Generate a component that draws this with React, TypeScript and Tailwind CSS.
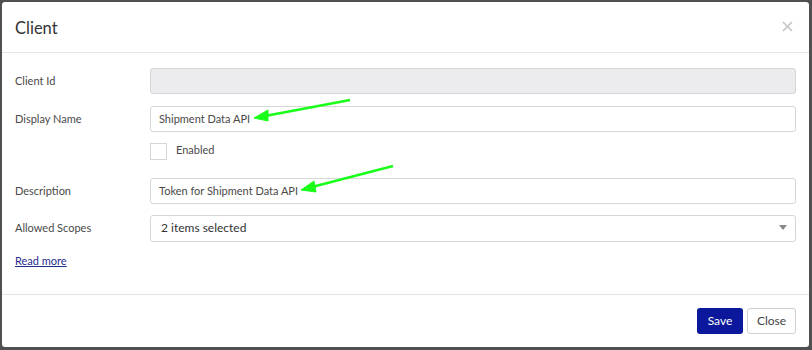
import React from "react";

const font = { fontFamily: 'Lato, "Open Sans", sans-serif' };

function Row({ label, children, h = "h-[26px]" }: { label: string; children: React.ReactNode; h?: string }) {
  return (
    <div className={`flex items-center ${h}`}>
      <div className="w-[135px] text-[11px] text-[#4a4a4a]">{label}</div>
      <div className="flex-1">{children}</div>
    </div>
  );
}

export default function App() {
  return (
    <div className="w-[812px] h-[350px] bg-[#505050] pt-[2px] pl-[2px] pr-[3px] pb-[3px]" style={font}>
      <div className="relative w-full h-full bg-white rounded-[3px] flex flex-col">
        <div className="h-[51px] flex items-center justify-between pl-[13px] pr-[16px] border-b border-[#e4e4e4]">
          <div className="mt-[2px] text-[16.5px] text-[#333]">Client</div>
          <svg width="11" height="11" viewBox="0 0 11 11" className="mt-[-1px]">
            <path d="M1 1 L10 10 M10 1 L1 10" stroke="#c4c4c4" strokeWidth="1.6" />
          </svg>
        </div>
        <div className="flex-1 pl-[13px] pr-[13px] pt-[15px] flex flex-col">
          <Row label="Client Id">
            <div className="h-[26px] rounded-[3px] border border-[#d6d6d6] bg-[#ececee]" />
          </Row>
          <div className="h-[12px]" />
          <Row label="Display Name">
            <div className="h-[26px] rounded-[3px] border border-[#d6d6d6] bg-white flex items-center px-[8px] text-[11px] text-[#4a4a4a]">
              Shipment Data API
            </div>
          </Row>
          <div className="h-[11px]" />
          <div className="flex items-center h-[17px]">
            <div className="w-[135px]" />
            <div className="w-[17px] h-[17px] border border-[#d6d6d6] bg-white" />
            <div className="ml-[9px] mt-[-3px] text-[11px] text-[#4a4a4a]">Enabled</div>
          </div>
          <div className="h-[18px]" />
          <Row label="Description">
            <div className="h-[26px] rounded-[3px] border border-[#d6d6d6] bg-white flex items-center px-[8px] text-[11px] text-[#4a4a4a]">
              Token for Shipment Data API
            </div>
          </Row>
          <div className="h-[11px]" />
          <Row label="Allowed Scopes">
            <div className="h-[27px] rounded-[3px] border border-[#d6d6d6] bg-white flex items-center justify-between pl-[10px] pr-[8px] text-[12px] text-[#333]">
              <span>2 items selected</span>
              <svg width="8" height="6" viewBox="0 0 8 6"><path d="M0 0 L8 0 L4 5 Z" fill="#888" /></svg>
            </div>
          </Row>
          <div className="mt-[12px] text-[11px] text-[#1f2d8f] underline">Read more</div>
        </div>
        <div className="h-[53px] border-t border-[#e4e4e4] flex items-center justify-end gap-[4px] pr-[13px]">
          <div className="h-[26px] w-[46px] rounded-[3px] bg-[#0b189c] text-white text-[12px] flex items-center justify-center">Save</div>
          <div className="h-[26px] w-[49px] rounded-[3px] border border-[#d0d0d0] bg-white text-[#444] text-[12px] flex items-center justify-center">Close</div>
        </div>
        <svg className="absolute left-0 top-0 pointer-events-none" width="807" height="345" viewBox="2 2 807 345">
          <g stroke="#1aff1a" strokeWidth="2.5" fill="#1aff1a">
            <line x1="350" y1="100" x2="265" y2="116" />
            <path d="M254 118 L268 110 L268 121 Z" strokeWidth="1" />
            <line x1="393" y1="166" x2="312" y2="187" />
            <path d="M301 190 L314 181 L316 192 Z" strokeWidth="1" />
          </g>
        </svg>
      </div>
    </div>
  );
}
